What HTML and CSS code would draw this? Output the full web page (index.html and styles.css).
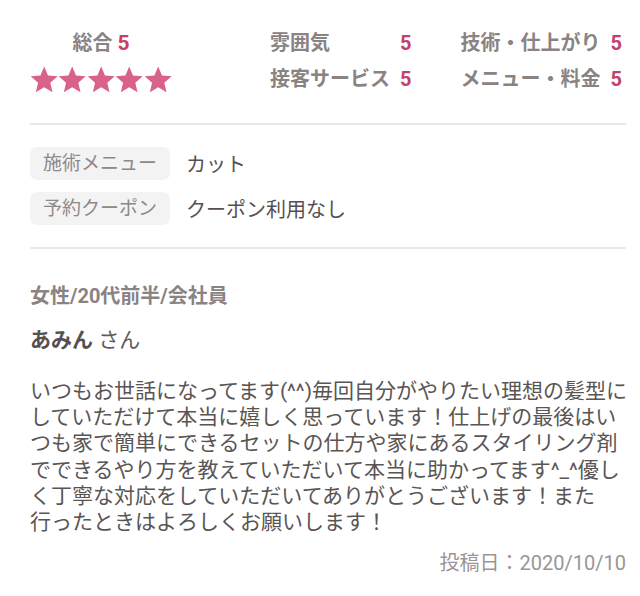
FILE: index.html
```html
<!DOCTYPE html>
<html lang="ja">
<head>
<meta charset="utf-8">
<link rel="stylesheet" href="styles.css">
</head>
<body>
<div class="page">
  <section class="ratings">
    <div class="total">
      <div class="total-label">総合 <span class="score">5</span></div>
      <div class="stars">
        <svg class="star" viewBox="1.6 1.6 20.8 20"><path d="M12 17.27L18.18 21l-1.64-7.03L22 9.24l-7.19-.61L12 2 9.19 8.63 2 9.24l5.46 4.73L5.82 21z"/></svg>
        <svg class="star" viewBox="1.6 1.6 20.8 20"><path d="M12 17.27L18.18 21l-1.64-7.03L22 9.24l-7.19-.61L12 2 9.19 8.63 2 9.24l5.46 4.73L5.82 21z"/></svg>
        <svg class="star" viewBox="1.6 1.6 20.8 20"><path d="M12 17.27L18.18 21l-1.64-7.03L22 9.24l-7.19-.61L12 2 9.19 8.63 2 9.24l5.46 4.73L5.82 21z"/></svg>
        <svg class="star" viewBox="1.6 1.6 20.8 20"><path d="M12 17.27L18.18 21l-1.64-7.03L22 9.24l-7.19-.61L12 2 9.19 8.63 2 9.24l5.46 4.73L5.82 21z"/></svg>
        <svg class="star" viewBox="1.6 1.6 20.8 20"><path d="M12 17.27L18.18 21l-1.64-7.03L22 9.24l-7.19-.61L12 2 9.19 8.63 2 9.24l5.46 4.73L5.82 21z"/></svg>
      </div>
    </div>
    <div class="sub">
      <div class="item"><span>雰囲気</span><span class="score">5</span></div>
      <div class="item"><span>技術・仕上がり</span><span class="score">5</span></div>
      <div class="item"><span>接客サービス</span><span class="score">5</span></div>
      <div class="item"><span>メニュー・料金</span><span class="score">5</span></div>
    </div>
  </section>

  <section class="meta">
    <div class="meta-row"><span class="tag">施術メニュー</span><span class="value">カット</span></div>
    <div class="meta-row"><span class="tag">予約クーポン</span><span class="value">クーポン利用なし</span></div>
  </section>

  <section class="review">
    <div class="profile">女性/20代前半/会社員</div>
    <div class="name"><b>あみん</b> さん</div>
    <p class="body">いつもお世話になってます(^^)毎回自分がやりたい理想の髪型にしていただけて本当に嬉しく思っています！仕上げの最後はいつも家で簡単にできるセットの仕方や家にあるスタイリング剤でできるやり方を教えていただいて本当に助かってます^_^優しく丁寧な対応をしていただいてありがとうございます！また<br>行ったときはよろしくお願いします！</p>
    <div class="date">投稿日：2020/10/10</div>
  </section>
</div>
</body>
</html>
```

FILE: styles.css
```css
html, body {
  margin: 0;
  padding: 0;
  background: #ffffff;
}
body {
  font-family: Roboto, "Noto Sans CJK JP", sans-serif;
  color: #575252;
}
.page {
  padding: 25px 14px 0 30px;
}
.ratings {
  display: flex;
  align-items: flex-start;
  padding-bottom: 26px;
  border-bottom: 2px solid #e8e8e8;
}
.total {
  width: 142px;
  display: flex;
  flex-direction: column;
  align-items: center;
}
.total-label {
  font-size: 20px;
  font-weight: bold;
  line-height: 36px;
  color: #8a8383;
}
.total-label .score {
  font-size: 21px;
}
.score {
  color: #c63e6c;
  font-weight: bold;
}
.stars {
  display: flex;
  height: 36px;
  align-items: center;
}
.star {
  width: 28.4px;
  height: 27px;
  fill: #d9628a;
}
.sub {
  margin-left: 98px;
  display: grid;
  grid-template-columns: auto auto;
  column-gap: 49px;
  font-size: 20px;
  font-weight: bold;
  line-height: 36px;
  color: #8a8383;
}
.item {
  display: flex;
  justify-content: space-between;
  gap: 10px;
}
.meta {
  padding: 22px 0 22px;
  border-bottom: 2px solid #e8e8e8;
  display: flex;
  flex-direction: column;
  gap: 12px;
}
.meta-row {
  display: flex;
  align-items: center;
  gap: 16px;
}
.tag {
  box-sizing: border-box;
  width: 140px;
  height: 33px;
  line-height: 33px;
  text-align: center;
  background: #f4f3f3;
  border-radius: 7px;
  font-size: 19px;
  color: #8e8888;
}
.value {
  font-size: 20px;
  color: #555050;
}
.review {
  padding-top: 32px;
}
.profile {
  font-size: 20px;
  font-weight: bold;
  line-height: 30px;
  color: #8a8383;
}
.name {
  margin-top: 14px;
  font-size: 21px;
  line-height: 30px;
  color: #5e5959;
}
.name b {
  color: #555050;
}
.body {
  margin: 23px -8px 0 0;
  font-size: 21px;
  line-height: 26.2px;
  color: #5a5555;
}
.date {
  margin-top: 15px;
  text-align: right;
  font-size: 20px;
  line-height: 26px;
  color: #9a9595;
}
```
